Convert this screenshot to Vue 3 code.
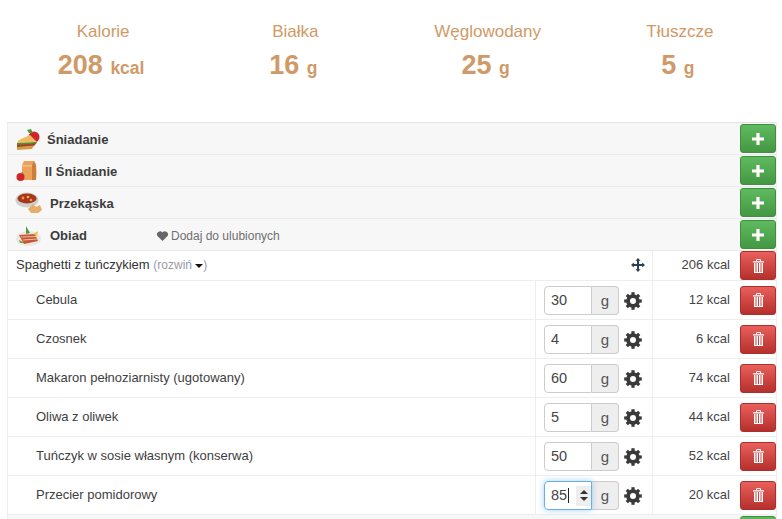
<script setup>
const meals = [
  { name: 'Śniadanie', icon: 'a', cls: 'w-a' },
  { name: 'II Śniadanie', icon: 'b', cls: 'w-b' },
  { name: 'Przekąska', icon: 'c', cls: 'w-c' },
  { name: 'Obiad', icon: 'd', cls: 'w-c', fav: true }
]
const items = [
  { name: 'Cebula', qty: '30', kcal: '12 kcal' },
  { name: 'Czosnek', qty: '4', kcal: '6 kcal' },
  { name: 'Makaron pełnoziarnisty (ugotowany)', qty: '60', kcal: '74 kcal' },
  { name: 'Oliwa z oliwek', qty: '5', kcal: '44 kcal' },
  { name: 'Tuńczyk w sosie własnym (konserwa)', qty: '50', kcal: '52 kcal' },
  { name: 'Przecier pomidorowy', qty: '85', kcal: '20 kcal', focus: true }
]
const stats = [
  { label: 'Kalorie', value: '208', unit: 'kcal' },
  { label: 'Białka', value: '16', unit: 'g' },
  { label: 'Węglowodany', value: '25', unit: 'g' },
  { label: 'Tłuszcze', value: '5', unit: 'g' }
]
const teeth = [0, 45, 90, 135, 180, 225, 270, 315]
</script>

<template>
  <div class="page">
    <div class="stats">
      <div v-for="s in stats" :key="s.label" class="stat">
        <div class="stat-label">{{ s.label }}</div>
        <div class="stat-value">{{ s.value }} <small>{{ s.unit }}</small></div>
      </div>
    </div>

    <div class="table">
      <div v-for="m in meals" :key="m.name" class="meal">
        <span class="food" :class="m.cls">
          <svg v-if="m.icon === 'a'" width="26" height="24" viewBox="0 0 26 24">
            <circle cx="19" cy="10" r="5.5" fill="#d2232a"/>
            <path d="M12 3 L16 2 L18 6 L14 6 Z" fill="#4f9a3c"/>
            <path d="M2 16 Q3 13 6 12 L15 8 L22 15 Z" fill="#eebb63"/>
            <path d="M2 16 L22 15 L21 17 L2 19 Z" fill="#5e8a2c"/>
            <path d="M2 18 L21 16.5 L19 19 L2 21 Z" fill="#a5402a"/>
            <path d="M2 20 L19 18.5 L17 22 L2 23 Z" fill="#d19a48"/>
          </svg>
          <svg v-else-if="m.icon === 'b'" width="26" height="24" viewBox="0 0 26 24">
            <path d="M7 6 L9 2 H19 L21 6 Q21.500 14 21 21 H7 Z" fill="#eba35c"/>
            <path d="M17 6 L19 2 L21 6 Q21.500 14 21 21 H17 Z" fill="#cb7e3e"/>
            <path d="M7 6 H17 V7.500 H7 Z" fill="#f4bf85"/>
            <circle cx="5.500" cy="18" r="4" fill="#d2232a"/>
            <path d="M5 14 L8 13 L7 15 Z" fill="#4f9a3c"/>
          </svg>
          <svg v-else-if="m.icon === 'c'" width="28" height="24" viewBox="0 0 28 24">
            <ellipse cx="12" cy="9" rx="11.500" ry="7.500" fill="#cfd0cb"/>
            <ellipse cx="12" cy="7.500" rx="9.500" ry="5" fill="#a9361c"/>
            <circle cx="8" cy="7" r="1.400" fill="#e3a23d"/>
            <circle cx="13" cy="6" r="1.300" fill="#d9c04a"/>
            <circle cx="16" cy="9" r="1.300" fill="#e3a23d"/>
            <path d="M13 18 L18 13 L21 16 L25 14 L27 19 L23 22 L16 22 Z" fill="#e4ad6a"/>
          </svg>
          <svg v-else width="28" height="24" viewBox="0 0 28 24">
            <ellipse cx="13.500" cy="15.500" rx="12.500" ry="7.500" fill="#e9e8e2"/>
            <path d="M4 12 L20 11 L23 18 L9 21 Z" fill="#c9533a"/>
            <path d="M6 14 L21 13.500 M8 17 L22 16" stroke="#efc08d" stroke-width="1.200"/>
            <path d="M11 11 L11 3 L15 10 Z" fill="#4f9a3c"/>
            <path d="M18 11 L23 8 L22 13 Z" fill="#e3c84a"/>
            <path d="M4 17 L10 20 L5 20 Z" fill="#6aa33e"/>
          </svg>
        </span>
        <span class="meal-name">{{ m.name }}</span>
        <span v-if="m.fav" class="fav">
          <svg width="11" height="10" viewBox="0 0 11 10"><path d="M5.500 10 L.7 5.200 A2.800 2.800 0 0 1 5.500 1.500 A2.800 2.800 0 0 1 10.300 5.200 Z" fill="#666"/></svg>
          Dodaj do ulubionych
        </span>
        <button class="btn green" aria-label="Dodaj">
          <svg width="12" height="12" viewBox="0 0 12 12"><path d="M4.400 0h3.200v4.400H12v3.200H7.600V12H4.400V7.600H0V4.400h4.400z" fill="#fff"/></svg>
        </button>
      </div>

      <div class="dish">
        <div class="dish-name">
          <span class="nudge">Spaghetti z tuńczykiem <span class="muted">(rozwiń <i class="caret"></i>)</span></span>
          <svg class="move" width="14" height="14" viewBox="0 0 14 14"><path d="M7 0 9.600 2.800H8V6h3.200V4.400L14 7l-2.800 2.600V8H8v3.200h1.600L7 14l-2.600-2.800H6V8H2.800v1.600L0 7l2.800-2.600V6H6V2.800H4.400z" fill="#2f3f52"/></svg>
        </div>
        <div class="kcal nudge">206 kcal</div>
        <button class="btn red" aria-label="Usuń">
          <svg width="11" height="14" viewBox="0 0 11 14">
            <path d="M3.500 2.500V.6h4v1.900" fill="none" stroke="#fff"/>
            <path d="M0 2.200h11v1.300H0z" fill="#fff"/>
            <path d="M1 4h1.500v9h1V4H5v9h1V4h1.500v9h1V4H10v10H1z" fill="#fff"/>
          </svg>
        </button>
      </div>

      <div v-for="it in items" :key="it.name" class="item">
        <div class="item-name"><span class="nudge">{{ it.name }}</span></div>
        <div class="item-qty">
          <div class="group" :class="{ focus: it.focus }">
            <div class="qty">
              <span class="qty-text">{{ it.qty }}</span>
              <i v-if="it.focus" class="cursor"></i>
              <span v-if="it.focus" class="spin"><i class="up"></i><i class="down"></i></span>
            </div>
            <div class="addon">g</div>
          </div>
          <svg class="cog" width="18" height="18" viewBox="0 0 18 18">
            <circle cx="9" cy="9" r="4.900" fill="none" stroke="#3a3a3a" stroke-width="3.800"/>
            <rect v-for="t in teeth" :key="t" x="7.400" y="0.200" width="3.200" height="3.500" fill="#3a3a3a" :transform="`rotate(${t} 9 9)`"/>
          </svg>
        </div>
        <div class="kcal nudge">{{ it.kcal }}</div>
        <button class="btn red" aria-label="Usuń">
          <svg width="11" height="14" viewBox="0 0 11 14">
            <path d="M3.500 2.500V.6h4v1.900" fill="none" stroke="#fff"/>
            <path d="M0 2.200h11v1.300H0z" fill="#fff"/>
            <path d="M1 4h1.500v9h1V4H5v9h1V4h1.500v9h1V4H10v10H1z" fill="#fff"/>
          </svg>
        </button>
      </div>

      <div class="meal tail"><button class="btn green"></button></div>
    </div>
  </div>
</template>

<style>
html, body { margin: 0; background: #fff; overflow: hidden; }
</style>

<style scoped>
.page {
  width: 782px;
  height: 519px;
  overflow: hidden;
  font-family: "Liberation Sans", Arial, sans-serif;
  font-size: 13px;
  color: #333;
  box-sizing: border-box;
  padding: 0 5px 0 7px;
}
.stats {
  display: grid;
  grid-template-columns: repeat(4, 1fr);
  height: 122px;
  padding-top: 22px;
  padding-right: 1px;
  box-sizing: border-box;
  color: #cf9a67;
  text-align: center;
}
.stat-label { font-size: 17px; line-height: 20px; }
.stat-value { font-size: 27px; line-height: 32px; font-weight: 700; margin-top: 7px; padding-right: 4px; }
.stat-value small { font-size: 17.500px; }
.table { border-top: 1px solid #e3e3e3; border-left: 1px solid #eee; border-right: 1px solid #eee; }
.meal {
  height: 31px;
  display: flex;
  align-items: center;
  background: #f7f7f7;
  border-bottom: 1px solid #e9e9e9;
  padding-left: 7px;
  position: relative;
}
.food { display: flex; }
.w-a { width: 32px; }
.w-b { width: 30px; }
.w-c { width: 35px; }
.meal-name { font-weight: 700; color: #3c3c3c; padding-top: 2px; }
.fav { position: absolute; left: 149px; top: 10px; font-size: 12px; color: #6f6f6f; display: flex; align-items: center; gap: 3px; }
.btn {
  width: 36px;
  padding: 0;
  border: 1px solid;
  border-radius: 3px;
  display: flex;
  align-items: center;
  justify-content: center;
  margin: 0;
}
.meal .btn { height: 29px; margin-left: auto; margin-right: 0; }
.green { background: linear-gradient(#5fba5f, #439843); border-color: #3e8f3e; }
.red { background: linear-gradient(#e95f5c, #b5302c); border-color: #ad2e2a; }
.dish {
  height: 29px;
  display: flex;
  align-items: center;
  background: #fff;
  border-bottom: 1px solid #eee;
}
.dish-name {
  flex: 1;
  align-self: stretch;
  display: flex;
  align-items: center;
  justify-content: space-between;
  padding: 0 7px 0 8px;
  font-size: 13px;
  border-right: 1px solid #eee;
}
.muted { color: #9a9aa8; font-size: 12px; }
.caret {
  display: inline-block;
  width: 0; height: 0;
  vertical-align: middle;
  border-left: 4px solid transparent;
  border-right: 4px solid transparent;
  border-top: 4px solid #111;
}
.move { margin-bottom: 2px; }
.dish .kcal { width: 87px; }
.dish .btn { height: 29px; }
.kcal { text-align: right; padding-right: 10px; box-sizing: border-box; color: #444; font-size: 13px; }
.nudge { padding-bottom: 2px; }
.item {
  height: 38px;
  display: flex;
  align-items: center;
  background: #fff;
  border-bottom: 1px solid #eee;
}
.item-name {
  width: 528px;
  box-sizing: border-box;
  padding-left: 28px;
  align-self: stretch;
  display: flex;
  align-items: center;
  border-right: 1px solid #eee;
  color: #3e3e3e;
}
.item-qty {
  width: 117px;
  box-sizing: border-box;
  align-self: stretch;
  display: flex;
  align-items: center;
  padding-left: 8px;
  border-right: 1px solid #eee;
}
.group { display: flex; width: 75px; height: 29px; box-sizing: border-box; }
.qty {
  width: 48px;
  box-sizing: border-box;
  border: 1px solid #ccc;
  border-radius: 4px 0 0 4px;
  padding-left: 6px;
  display: flex;
  align-items: center;
  font-size: 14.500px;
  color: #444;
  position: relative;
}
.addon {
  flex: 1;
  background: #eee;
  border: 1px solid #ccc;
  border-left: 0;
  border-radius: 0 4px 4px 0;
  display: flex;
  align-items: center;
  justify-content: center;
  font-size: 15px;
  color: #555;
}
.focus .qty {
  border: 1px solid #66afe9;
  box-shadow: 0 0 6px rgba(102, 175, 233, .6);
}
.cursor { width: 1px; height: 15px; background: #222; margin-left: 1px; }
.spin {
  position: absolute;
  right: 0;
  top: 4px;
  width: 15px;
  height: 20px;
  background: #eee;
  display: flex;
  flex-direction: column;
  align-items: center;
  justify-content: center;
  gap: 3px;
}
.up, .down { width: 0; height: 0; border-left: 4px solid transparent; border-right: 4px solid transparent; }
.up { border-bottom: 4px solid #333; }
.down { border-top: 4px solid #333; }
.cog { margin-left: 5px; margin-top: 2px; }
.item .kcal { width: 87px; }
.item .btn { height: 29px; }
.tail { height: 20px; }
.tail .btn { height: 29px; align-self: flex-start; margin-top: 1px; }
</style>
